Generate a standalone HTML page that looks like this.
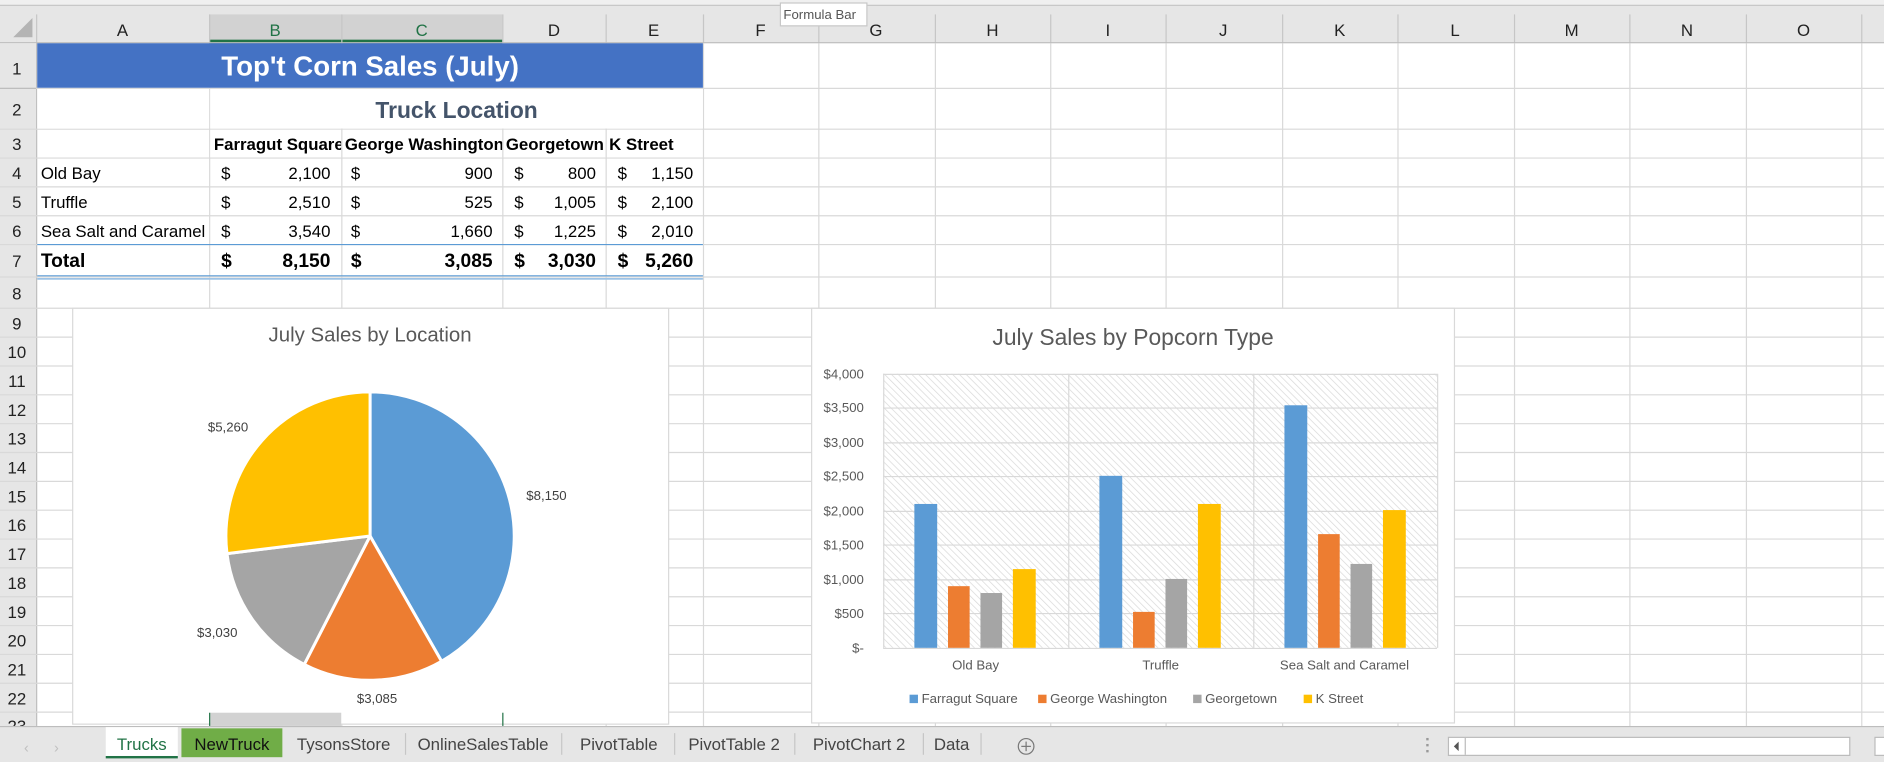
<!DOCTYPE html>
<html><head><meta charset="utf-8"><style>
html,body{margin:0;padding:0;background:#fff;overflow:hidden}
svg{display:block}
text{font-family:"Liberation Sans",sans-serif}
</style></head><body>
<svg width="1884" height="762" viewBox="0 0 1568 634" preserveAspectRatio="none" xmlns="http://www.w3.org/2000/svg">
<defs>
<pattern id="hatch" width="4" height="4" patternUnits="userSpaceOnUse" patternTransform="rotate(-45)">
<rect width="4" height="4" fill="#fff"/><line x1="0" y1="0" x2="0" y2="4" stroke="#d9d9d9" stroke-width="1.2"/>
</pattern>
</defs>
<rect width="1568" height="634" fill="#fff"/>
<rect x="0" y="0" width="1568" height="36" fill="#e6e6e6"/>
<rect x="0" y="0" width="1568" height="4" fill="#f0f0f0"/>
<line x1="0" y1="4.5" x2="1568" y2="4.5" stroke="#c8c8c8"/>
<rect x="174" y="12" width="244" height="24" fill="#d2d2d2"/>
<rect x="174" y="33" width="244" height="3" fill="#217346"/>
<polygon points="11,31 27,31 27,15" fill="#b4b4b4"/>
<g stroke="#c6c6c6" stroke-width="1">
<line x1="30.5" y1="12" x2="30.5" y2="36"/><line x1="174.5" y1="12" x2="174.5" y2="36"/><line x1="284.5" y1="12" x2="284.5" y2="36"/><line x1="418.5" y1="12" x2="418.5" y2="36"/><line x1="504.5" y1="12" x2="504.5" y2="36"/><line x1="585.5" y1="12" x2="585.5" y2="36"/><line x1="681.5" y1="12" x2="681.5" y2="36"/><line x1="778.5" y1="12" x2="778.5" y2="36"/><line x1="874.5" y1="12" x2="874.5" y2="36"/><line x1="970.5" y1="12" x2="970.5" y2="36"/><line x1="1067.5" y1="12" x2="1067.5" y2="36"/><line x1="1163.5" y1="12" x2="1163.5" y2="36"/><line x1="1260.5" y1="12" x2="1260.5" y2="36"/><line x1="1356.5" y1="12" x2="1356.5" y2="36"/><line x1="1453.5" y1="12" x2="1453.5" y2="36"/><line x1="1549.5" y1="12" x2="1549.5" y2="36"/>
</g>
<line x1="0" y1="35.5" x2="1568" y2="35.5" stroke="#bdbdbd"/>
<g font-size="14" fill="#222" text-anchor="middle">
<text x="102" y="30">A</text><text x="229" y="30" fill="#217346">B</text><text x="351" y="30" fill="#217346">C</text><text x="461" y="30">D</text><text x="544" y="30">E</text><text x="633" y="30">F</text><text x="729" y="30">G</text><text x="826" y="30">H</text><text x="922" y="30">I</text><text x="1018" y="30">J</text><text x="1115" y="30">K</text><text x="1211" y="30">L</text><text x="1308" y="30">M</text><text x="1404" y="30">N</text><text x="1501" y="30">O</text>
</g>
<rect x="649.5" y="2.5" width="72" height="19" fill="#fff" stroke="#c8c8c8"/>
<text x="652" y="16" font-size="11" fill="#555">Formula Bar</text>
<rect x="0" y="36" width="30" height="568" fill="#e6e6e6"/>
<line x1="30.5" y1="36" x2="30.5" y2="604" stroke="#bdbdbd"/>
<g stroke="#d9d9d9" stroke-width="1">
<line x1="0" y1="73.5" x2="1568" y2="73.5"/><line x1="0" y1="107.5" x2="1568" y2="107.5"/><line x1="0" y1="131.5" x2="1568" y2="131.5"/><line x1="0" y1="155.5" x2="1568" y2="155.5"/><line x1="0" y1="179.5" x2="1568" y2="179.5"/><line x1="0" y1="203.5" x2="1568" y2="203.5"/><line x1="0" y1="230.5" x2="1568" y2="230.5"/><line x1="0" y1="256.5" x2="1568" y2="256.5"/>
<line x1="0" y1="280.5" x2="1568" y2="280.5"/><line x1="0" y1="304.5" x2="1568" y2="304.5"/><line x1="0" y1="328.5" x2="1568" y2="328.5"/><line x1="0" y1="352.5" x2="1568" y2="352.5"/><line x1="0" y1="376.5" x2="1568" y2="376.5"/><line x1="0" y1="400.5" x2="1568" y2="400.5"/><line x1="0" y1="424.5" x2="1568" y2="424.5"/><line x1="0" y1="448.5" x2="1568" y2="448.5"/><line x1="0" y1="472.5" x2="1568" y2="472.5"/><line x1="0" y1="496.5" x2="1568" y2="496.5"/><line x1="0" y1="520.5" x2="1568" y2="520.5"/><line x1="0" y1="544.5" x2="1568" y2="544.5"/><line x1="0" y1="568.5" x2="1568" y2="568.5"/><line x1="0" y1="592.5" x2="1568" y2="592.5"/>
<line x1="174.5" y1="73" x2="174.5" y2="604"/><line x1="284.5" y1="107" x2="284.5" y2="604"/><line x1="418.5" y1="107" x2="418.5" y2="604"/><line x1="504.5" y1="107" x2="504.5" y2="604"/><line x1="585.5" y1="36" x2="585.5" y2="604"/><line x1="681.5" y1="36" x2="681.5" y2="604"/><line x1="778.5" y1="36" x2="778.5" y2="604"/><line x1="874.5" y1="36" x2="874.5" y2="604"/><line x1="970.5" y1="36" x2="970.5" y2="604"/><line x1="1067.5" y1="36" x2="1067.5" y2="604"/><line x1="1163.5" y1="36" x2="1163.5" y2="604"/><line x1="1260.5" y1="36" x2="1260.5" y2="604"/><line x1="1356.5" y1="36" x2="1356.5" y2="604"/><line x1="1453.5" y1="36" x2="1453.5" y2="604"/><line x1="1549.5" y1="36" x2="1549.5" y2="604"/>
</g>
<g stroke="#bdbdbd"><line x1="0" y1="73.5" x2="30" y2="73.5"/></g>
<g font-size="14" fill="#222" text-anchor="middle">
<text x="14" y="62">1</text><text x="14" y="96">2</text><text x="14" y="125">3</text><text x="14" y="149">4</text><text x="14" y="173">5</text><text x="14" y="197">6</text><text x="14" y="222">7</text><text x="14" y="249">8</text>
<text x="14" y="274">9</text><text x="14" y="298">10</text><text x="14" y="322">11</text><text x="14" y="346">12</text><text x="14" y="370">13</text><text x="14" y="394">14</text><text x="14" y="418">15</text><text x="14" y="442">16</text><text x="14" y="466">17</text><text x="14" y="490">18</text><text x="14" y="514">19</text><text x="14" y="538">20</text><text x="14" y="562">21</text><text x="14" y="586">22</text><text x="14" y="609">23</text>
</g>
<rect x="31" y="36" width="554" height="37" fill="#4472c4"/>
<text x="308" y="63" font-size="23" font-weight="bold" fill="#fff" text-anchor="middle">Top't Corn Sales (July)</text>
<rect x="31" y="74" width="143" height="33" fill="#fff"/>
<rect x="175" y="74" width="410" height="33" fill="#fff"/>
<text x="380" y="98" font-size="19" font-weight="bold" fill="#44546a" text-anchor="middle">Truck Location</text>
<g font-size="14" font-weight="bold" fill="#000">
<rect x="175" y="108" width="409" height="23" fill="#fff"/>
<svg x="177" y="108" width="107" height="23"><text x="1" y="17">Farragut Square</text></svg>
<svg x="286" y="108" width="132" height="23"><text x="1" y="17">George Washington</text></svg>
<svg x="420" y="108" width="84" height="23"><text x="1" y="17">Georgetown</text></svg>
<text x="507" y="125">K Street</text>
</g>
<g stroke="#d9d9d9"><line x1="284.5" y1="107" x2="284.5" y2="131"/><line x1="418.5" y1="107" x2="418.5" y2="131"/><line x1="504.5" y1="107" x2="504.5" y2="131"/></g>
<g font-size="14" fill="#000">
<text x="34" y="149">Old Bay</text><text x="34" y="173">Truffle</text>
<svg x="31" y="180" width="143" height="23"><text x="3" y="17">Sea Salt and Caramel</text></svg>
<text x="184" y="149">$</text><text x="292" y="149">$</text><text x="428" y="149">$</text><text x="514" y="149">$</text>
<text x="184" y="173">$</text><text x="292" y="173">$</text><text x="428" y="173">$</text><text x="514" y="173">$</text>
<text x="184" y="197">$</text><text x="292" y="197">$</text><text x="428" y="197">$</text><text x="514" y="197">$</text>
<g text-anchor="end">
<text x="275" y="149">2,100</text><text x="410" y="149">900</text><text x="496" y="149">800</text><text x="577" y="149">1,150</text>
<text x="275" y="173">2,510</text><text x="410" y="173">525</text><text x="496" y="173">1,005</text><text x="577" y="173">2,100</text>
<text x="275" y="197">3,540</text><text x="410" y="197">1,660</text><text x="496" y="197">1,225</text><text x="577" y="197">2,010</text>
</g>
<g font-weight="bold" font-size="16">
<text x="34" y="222">Total</text><text x="184" y="222">$</text><text x="292" y="222">$</text><text x="428" y="222">$</text><text x="514" y="222">$</text>
<g text-anchor="end"><text x="275" y="222">8,150</text><text x="410" y="222">3,085</text><text x="496" y="222">3,030</text><text x="577" y="222">5,260</text></g>
</g>
</g>
<line x1="31" y1="203.5" x2="585" y2="203.5" stroke="#5b9bd5"/>
<line x1="31" y1="229.5" x2="585" y2="229.5" stroke="#5b9bd5"/>
<line x1="31" y1="232" x2="585" y2="232" stroke="#9dc3e6" stroke-width="1.5"/>
<rect x="60.5" y="256.5" width="496" height="346" fill="#fff" stroke="#d9d9d9"/>
<text x="308" y="284" font-size="17" fill="#595959" text-anchor="middle">July Sales by Location</text>
<g stroke="#fff" stroke-width="2.5" stroke-linejoin="round">
<path d="M308,446 L308,326 A120,120 0 0 1 367.5,550.2 Z" fill="#5b9bd5"/>
<path d="M308,446 L367.5,550.2 A120,120 0 0 1 253.2,552.8 Z" fill="#ed7d31"/>
<path d="M308,446 L253.2,552.8 A120,120 0 0 1 188.9,460.6 Z" fill="#a5a5a5"/>
<path d="M308,446 L188.9,460.6 A120,120 0 0 1 308,326 Z" fill="#ffc000"/>
</g>
<g font-size="11" fill="#404040">
<text x="173" y="359">$5,260</text><text x="438" y="416">$8,150</text><text x="164" y="530">$3,030</text><text x="297" y="585">$3,085</text>
</g>
<rect x="675.5" y="256.5" width="535" height="345" fill="#fff" stroke="#d9d9d9"/>
<text x="943" y="287" font-size="19" fill="#595959" text-anchor="middle">July Sales by Popcorn Type</text>
<rect x="735" y="311" width="461" height="228" fill="url(#hatch)"/>
<g stroke="#d9d9d9">
<line x1="735" y1="311.5" x2="1196" y2="311.5"/><line x1="735" y1="339.5" x2="1196" y2="339.5"/><line x1="735" y1="368.5" x2="1196" y2="368.5"/><line x1="735" y1="396.5" x2="1196" y2="396.5"/><line x1="735" y1="425.5" x2="1196" y2="425.5"/><line x1="735" y1="453.5" x2="1196" y2="453.5"/><line x1="735" y1="482.5" x2="1196" y2="482.5"/><line x1="735" y1="510.5" x2="1196" y2="510.5"/><line x1="735" y1="539.5" x2="1196" y2="539.5"/>
<line x1="735.5" y1="311" x2="735.5" y2="539"/><line x1="889.5" y1="311" x2="889.5" y2="539"/><line x1="1043.5" y1="311" x2="1043.5" y2="539"/><line x1="1196.5" y1="311" x2="1196.5" y2="539"/>
</g>
<g font-size="11" fill="#595959" text-anchor="end">
<text x="719" y="315">$4,000</text><text x="719" y="343">$3,500</text><text x="719" y="372">$3,000</text><text x="719" y="400">$2,500</text><text x="719" y="429">$2,000</text><text x="719" y="457">$1,500</text><text x="719" y="486">$1,000</text><text x="719" y="514">$500</text><text x="719" y="543">$-</text>
</g>
<rect x="761" y="419.3" width="19" height="119.7" fill="#5b9bd5"/>
<rect x="789" y="487.7" width="18" height="51.3" fill="#ed7d31"/>
<rect x="816" y="493.4" width="18" height="45.6" fill="#a5a5a5"/>
<rect x="843" y="473.5" width="19" height="65.5" fill="#ffc000"/>
<rect x="915" y="395.9" width="19" height="143.1" fill="#5b9bd5"/>
<rect x="943" y="509.1" width="18" height="29.9" fill="#ed7d31"/>
<rect x="970" y="481.7" width="18" height="57.3" fill="#a5a5a5"/>
<rect x="997" y="419.3" width="19" height="119.7" fill="#ffc000"/>
<rect x="1069" y="337.2" width="19" height="201.8" fill="#5b9bd5"/>
<rect x="1097" y="444.4" width="18" height="94.6" fill="#ed7d31"/>
<rect x="1124" y="469.2" width="18" height="69.8" fill="#a5a5a5"/>
<rect x="1151" y="424.4" width="19" height="114.6" fill="#ffc000"/>
<g font-size="11" fill="#595959" text-anchor="middle">
<text x="812" y="557">Old Bay</text><text x="966" y="557">Truffle</text><text x="1119" y="557">Sea Salt and Caramel</text>
</g>
<g font-size="11" fill="#595959">
<rect x="757" y="578" width="7" height="7" fill="#5b9bd5"/><text x="767" y="585">Farragut Square</text>
<rect x="864" y="578" width="7" height="7" fill="#ed7d31"/><text x="874" y="585">George Washington</text>
<rect x="993" y="578" width="7" height="7" fill="#a5a5a5"/><text x="1003" y="585">Georgetown</text>
<rect x="1085" y="578" width="7" height="7" fill="#ffc000"/><text x="1095" y="585">K Street</text>
</g>
<rect x="175" y="593" width="109" height="11" fill="#d2d2d2"/>
<line x1="174.5" y1="593" x2="174.5" y2="604" stroke="#217346"/>
<line x1="418.5" y1="593" x2="418.5" y2="604" stroke="#217346"/>
<rect x="0" y="604" width="1568" height="30" fill="#e6e6e6"/>
<line x1="0" y1="604.5" x2="1568" y2="604.5" stroke="#bdbdbd"/>
<text x="20" y="626" font-size="12" fill="#c0c0c0">‹</text><text x="45" y="626" font-size="12" fill="#c0c0c0">›</text>
<rect x="88" y="605" width="60" height="26" fill="#fff"/>
<rect x="88" y="629" width="60" height="2" fill="#217346"/>
<rect x="151" y="606" width="84" height="24" fill="#70ad47"/>
<g font-size="14" fill="#444" text-anchor="middle">
<text x="118" y="624" fill="#217346">Trucks</text><text x="193" y="624" fill="#111">NewTruck</text>
<text x="286" y="624">TysonsStore</text><text x="402" y="624">OnlineSalesTable</text><text x="515" y="624">PivotTable</text><text x="611" y="624">PivotTable 2</text><text x="715" y="624">PivotChart 2</text><text x="792" y="624">Data</text>
</g>
<g stroke="#c6c6c6"><line x1="337.5" y1="610" x2="337.5" y2="628"/><line x1="467.5" y1="610" x2="467.5" y2="628"/><line x1="561.5" y1="610" x2="561.5" y2="628"/><line x1="661.5" y1="610" x2="661.5" y2="628"/><line x1="768.5" y1="610" x2="768.5" y2="628"/><line x1="816.5" y1="610" x2="816.5" y2="628"/></g>
<circle cx="854" cy="621" r="6.5" fill="none" stroke="#777"/>
<line x1="850" y1="621" x2="858" y2="621" stroke="#777"/><line x1="854" y1="617" x2="854" y2="625" stroke="#777"/>
<g fill="#999"><rect x="1187" y="614" width="2" height="2"/><rect x="1187" y="619" width="2" height="2"/><rect x="1187" y="624" width="2" height="2"/></g>
<rect x="1205.5" y="613.5" width="334" height="15" fill="#fff" stroke="#bbb"/>
<line x1="1219.5" y1="614" x2="1219.5" y2="628" stroke="#bbb"/>
<polygon points="1214,617 1214,625 1210,621" fill="#555"/>
<rect x="1560.5" y="613.5" width="10" height="15" fill="#fff" stroke="#bbb"/>
</svg>
</body></html>
